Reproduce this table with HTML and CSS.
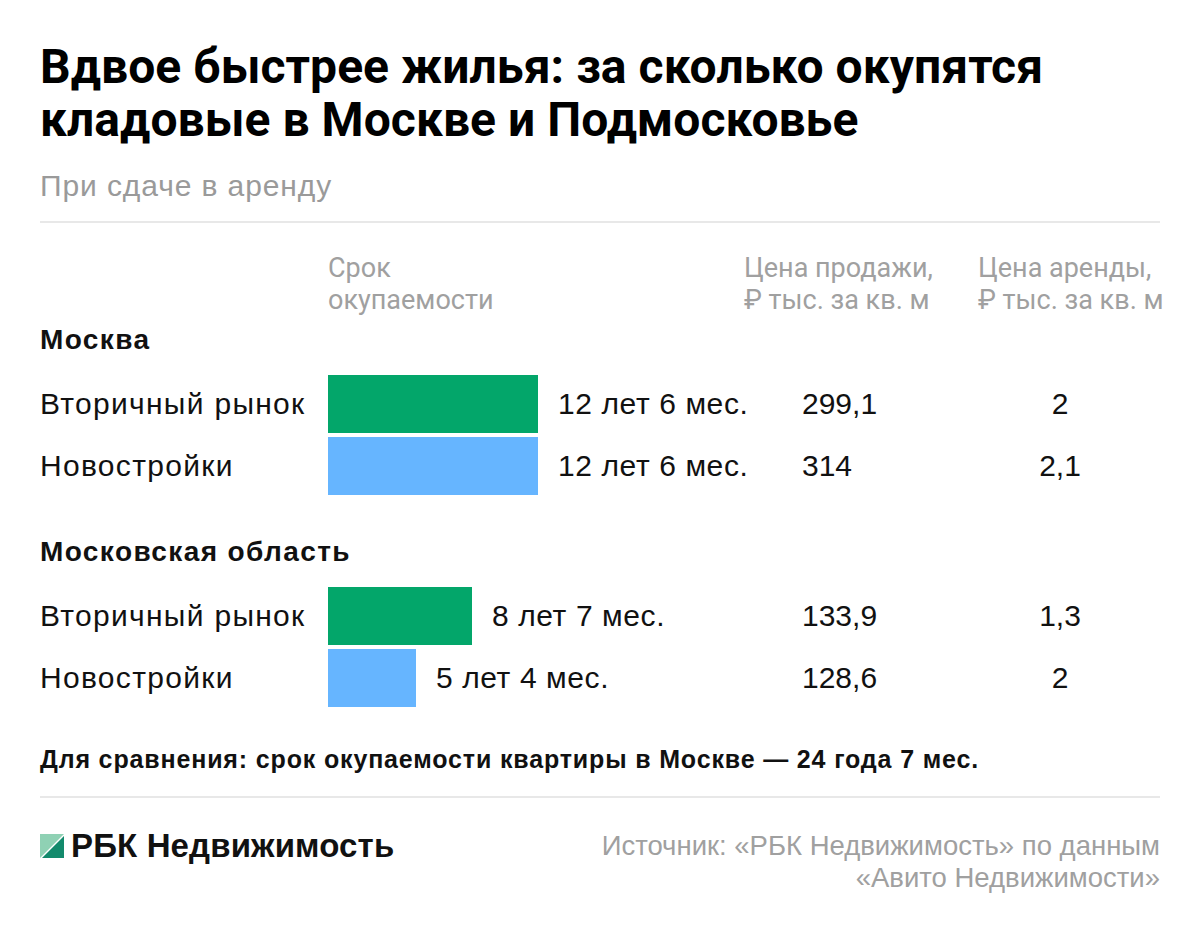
FILE: index.html
```html
<!DOCTYPE html>
<html lang="ru">
<head>
<meta charset="utf-8">
<link rel="stylesheet" href="styles.css">
</head>
<body>
<div class="page">
  <h1 class="title">Вдвое быстрее жилья: за сколько окупятся кладовые в Москве и Подмосковье</h1>
  <div class="subtitle">При сдаче в аренду</div>
  <div class="rule rule-top"></div>

  <div class="table">
    <div class="head">
      <div class="hcell c2">Срок<br>окупаемости</div>
      <div class="hcell c3">Цена продажи,<br>₽ тыс. за кв. м</div>
      <div class="hcell c4">Цена аренды,<br>₽ тыс. за кв. м</div>
    </div>

    <div class="group first">Москва</div>
    <div class="rows">
      <div class="row">
        <div class="label">Вторичный рынок</div>
        <div class="barcell"><div class="bar green" style="width:210px"></div><span class="blabel">12 лет 6 мес.</span></div>
        <div class="val c3">299,1</div>
        <div class="val c4">2</div>
      </div>
      <div class="row">
        <div class="label">Новостройки</div>
        <div class="barcell"><div class="bar blue" style="width:210px"></div><span class="blabel">12 лет 6 мес.</span></div>
        <div class="val c3">314</div>
        <div class="val c4">2,1</div>
      </div>
    </div>

    <div class="group second">Московская область</div>
    <div class="rows">
      <div class="row">
        <div class="label">Вторичный рынок</div>
        <div class="barcell"><div class="bar green" style="width:144px"></div><span class="blabel">8 лет 7 мес.</span></div>
        <div class="val c3">133,9</div>
        <div class="val c4">1,3</div>
      </div>
      <div class="row">
        <div class="label">Новостройки</div>
        <div class="barcell"><div class="bar blue" style="width:88px"></div><span class="blabel">5 лет 4 мес.</span></div>
        <div class="val c3">128,6</div>
        <div class="val c4">2</div>
      </div>
    </div>
  </div>

  <div class="note">Для сравнения: срок окупаемости квартиры в Москве — 24 года 7 мес.</div>
  <div class="rule rule-bottom"></div>

  <div class="footer">
    <div class="logo">
      <svg class="logo-icon" viewBox="0 0 24 24" width="24" height="24">
        <polygon points="0,0 24,0 0,24" fill="#8fd1b4"/>
        <polygon points="24,2 24,24 2,24" fill="#138a6c"/>
      </svg>
      <span class="logo-text">РБК Недвижимость</span>
    </div>
    <div class="source">Источник: «РБК Недвижимость» по данным<br>«Авито Недвижимости»</div>
  </div>
</div>
</body>
</html>
```

FILE: styles.css
```css
* { box-sizing: border-box; }
html, body { margin: 0; padding: 0; background: #fff; }
body {
  font-family: "Liberation Sans", Arial, sans-serif;
  color: #111;
}
.page {
  width: 1200px;
  padding: 40px 40px 0 40px;
}
.title {
  margin: 0;
  font-family: Roboto, "Liberation Sans", Arial, sans-serif;
  font-size: 48px;
  line-height: 53px;
  font-weight: 700;
  color: #000;
  letter-spacing: 0.05px;
}
.subtitle {
  margin-top: 22px;
  font-size: 30px;
  line-height: 36px;
  color: #9a9a9a;
  letter-spacing: 0.9px;
}
.rule {
  height: 2px;
  background: #e8e8e8;
}
.rule-top { margin-top: 17px; }

.table { margin-top: 29px; }
.head {
  display: grid;
  grid-template-columns: 288px 416px 234px 182px;
  font-family: Roboto, "Liberation Sans", Arial, sans-serif;
  font-size: 27px;
  line-height: 32px;
  color: #a0a0a0;
}
.hcell.c2 { grid-column: 2; }
.hcell.c3 { grid-column: 3; }
.hcell.c4 { grid-column: 4; white-space: nowrap; }

.group {
  font-size: 28px;
  line-height: 32px;
  font-weight: 700;
  color: #111;
  letter-spacing: 1.4px;
}
.group.first { margin-top: 8px; }
.group.second { margin-top: 41px; }

.rows {
  display: flex;
  flex-direction: column;
  gap: 4px;
  margin-top: 19px;
}
.row {
  display: grid;
  grid-template-columns: 288px 416px 234px 182px;
  height: 58px;
  align-items: center;
  font-size: 30px;
}
.label { white-space: nowrap; letter-spacing: 1.3px; }
.barcell {
  display: flex;
  align-items: center;
  height: 58px;
  gap: 20px;
}
.bar { height: 58px; flex: none; }
.bar.green { background: #03a66a; }
.bar.blue { background: #66b5ff; }
.blabel { white-space: nowrap; letter-spacing: 0.6px; }
.val.c3 { padding-left: 58px; text-align: left; }
.val.c4 { width: 164px; text-align: center; }

.note {
  margin-top: 36px;
  font-size: 25px;
  line-height: 32px;
  font-weight: 700;
  color: #111;
  letter-spacing: 0.85px;
}
.rule-bottom { margin-top: 21px; }

.footer {
  display: flex;
  justify-content: space-between;
  align-items: flex-start;
  margin-top: 32px;
}
.logo {
  display: flex;
  align-items: center;
  gap: 7px;
  height: 32px;
}
.logo-icon { display: block; }
.logo-text {
  font-size: 33px;
  font-weight: 700;
  color: #111;
  letter-spacing: 0.15px;
}
.source {
  text-align: right;
  font-size: 27.5px;
  line-height: 32px;
  color: #a0a0a0;
}
```
